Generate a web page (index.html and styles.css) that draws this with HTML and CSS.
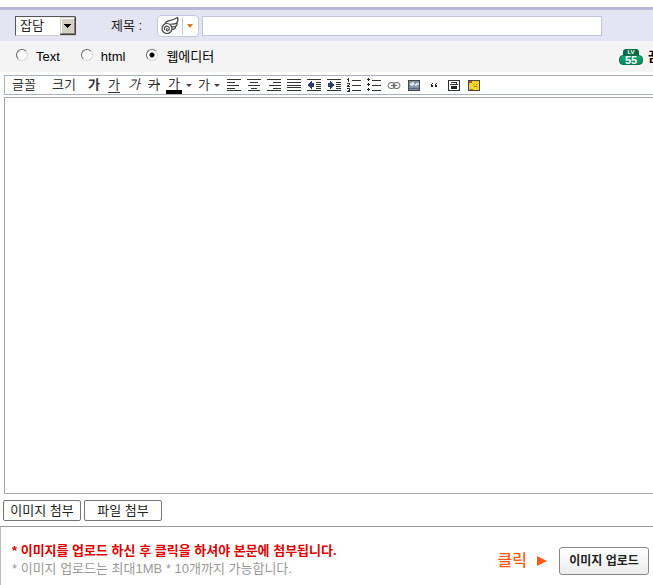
FILE: index.html
```html
<!DOCTYPE html>
<html lang="ko">
<head>
<meta charset="utf-8">
<meta name="viewport" content="width=device-width, initial-scale=1">
<title>글쓰기</title>
<link rel="stylesheet" href="styles.css">
</head>
<body>
<form class="write">
  <div class="subject">
    <div class="category">
      <select class="category-select" aria-label="분류"><option>잡담</option></select>
      <svg class="category-arrow" viewBox="0 0 16 18" shape-rendering="crispEdges" aria-hidden="true"><path fill="#d4d0c8" d="M0 0h16v18H0z"/><path fill="#fff" d="M1 1h14v1H2v14H1z"/><path fill="#808080" d="M14 1h1v16H1v-1h13z"/><path fill="#404040" d="M15 0h1v18H0v-1h15z"/><path d="M4 7h7v1H4zM5 8h5v1H5zM6 9h3v1H6zM7 10h1v1H7z"/></svg>
    </div>
    <label class="subject-label" for="subject">제목 :</label>
    <button class="emblem" type="button" aria-label="머리 아이콘">
      <svg width="40" height="20" viewBox="0 0 40 20" aria-hidden="true"><g fill="none" stroke="#444" stroke-width="1.2" stroke-linecap="round" stroke-linejoin="round"><path fill="#fff" d="M7 7.500C8 4.500 11 5 14 4C17 3 18 2.500 19.500 1.500C20.300 3.500 20 5.500 18.800 7C19.500 8 19 9.500 17.500 10.500C17.800 12 16.500 13.300 14.500 13.300"/><circle cx="9" cy="12.500" r="5" fill="#fff"/><path d="M6.500 13.500C5.500 11 8 9.500 10 10.500C12.300 11.700 11.500 15 9.300 14.800C7.800 14.500 8 12.500 9.300 12.800M13 8C15.500 8.300 17.500 7.800 18.800 7M14.500 10.800C15.700 11 16.800 10.900 17.500 10.500"/></g><path stroke="#c5c7dc" d="M24.500 2v16"/><path fill="#dc7a20" d="M29 8h6l-3 4z"/></svg>
    </button>
    <input class="subject-input" id="subject" type="text">
  </div>

  <div class="modes">
    <label class="mode"><input type="radio" name="mode">Text</label>
    <label class="mode"><input type="radio" name="mode">html</label>
    <label class="mode"><input type="radio" name="mode" checked>웹에디터</label>
    <div class="member">
      <span class="level"><span class="level-top">LV</span><span class="level-number">55</span></span>
      <b class="member-name">꿈</b>
    </div>
  </div>

  <div class="toolbar" role="toolbar" aria-label="서식">
    <button class="tool font" type="button">글꼴</button>
    <button class="tool size" type="button">크기</button>
    <button class="tool" type="button"><b>가</b></button>
    <button class="tool" type="button"><span class="underline">가</span></button>
    <button class="tool" type="button"><i>가</i></button>
    <button class="tool" type="button"><s>가</s></button>
    <button class="tool wide" type="button"><span class="ink">가</span><span class="caret"></span></button>
    <button class="tool wide" type="button"><span>가</span><span class="caret"></span></button>
    <button class="tool" type="button" aria-label="왼쪽 정렬"><svg viewBox="0 0 14 14"><path d="M0 1.500h14M0 4.500h8M0 7.500h12M0 10.500h8M0 12.500h14"/></svg></button>
    <button class="tool" type="button" aria-label="가운데 정렬"><svg viewBox="0 0 14 14"><path d="M0 1.500h14M3 4.500h8M1 7.500h12M4 10.500h6M1 12.500h12"/></svg></button>
    <button class="tool" type="button" aria-label="오른쪽 정렬"><svg viewBox="0 0 14 14"><path d="M0 1.500h14M6 4.500h8M2 7.500h12M6 10.500h8M0 12.500h14"/></svg></button>
    <button class="tool" type="button" aria-label="양쪽 정렬"><svg viewBox="0 0 14 14"><path d="M0 1.500h14M0 4.500h14M0 7.500h14M0 9.500h14M0 12.500h14"/></svg></button>
    <button class="tool" type="button" aria-label="내어쓰기"><svg viewBox="0 0 14 14"><path d="M0 1.500h14M9 4.500h5M9 6.500h5M9 8.500h5M9 10.500h5M0 12.500h14"/><path class="navy" d="M1 6h1V5h1V4h1V3h1v2h2v4H5v2H4v-1H3V9H2V8H1z"/></svg></button>
    <button class="tool" type="button" aria-label="들여쓰기"><svg viewBox="0 0 14 14"><path d="M0 1.500h14M9 4.500h5M9 6.500h5M9 8.500h5M9 10.500h5M0 12.500h14"/><path class="navy" d="M7 6H6V5H5V4H4V3H3v2H1v4h2v2h1v-1h1V9h1V8h1z"/></svg></button>
    <button class="tool" type="button" aria-label="번호 목록"><svg viewBox="0 0 14 14"><path d="M5 2.500h9M5 7.500h9M5 12.500h9M1.500 0v4M0 1.500h2M0 5.500h2M2.500 5v2M0 7.500h2M0 8.500h3M0 10.500h2M1 12.500h1M0 13.500h2M2.500 10v4"/></svg></button>
    <button class="tool" type="button" aria-label="글머리 목록"><svg viewBox="0 0 14 14"><path d="M5 2.500h9M5 7.500h9M5 12.500h9"/><path class="black" d="M0 1h3v1H0zM0 6h3v1H0zM0 11h3v1H0zM1 0h1v3H1zM1 5h1v3H1zM1 10h1v3H1z"/></svg></button>
    <button class="tool" type="button" aria-label="링크"><svg class="smooth" viewBox="0 0 14 14"><rect x="1" y="4.500" width="7" height="6" rx="3"/><rect x="6" y="4.500" width="7" height="6" rx="3"/><path d="M4 7.500h6"/></svg></button>
    <button class="tool" type="button" aria-label="사진"><svg viewBox="0 0 14 14"><path fill="#8293a8" stroke="#444" d="M1.500 2.500h11v10h-11z"/><path class="pale" d="M3 5h2V4h2v2h2V5h3v2h-2v1H8V7H6v1H4V7H3z"/><path stroke="#596575" d="M2 10.500h10"/></svg></button>
    <button class="tool" type="button" aria-label="인용"><svg viewBox="0 0 14 14"><path class="black" d="M5 5h1v1H5v1h1v2H4V6h1zM9 5h1v1H9v1h1v2H8V6h1z"/></svg></button>
    <button class="tool" type="button" aria-label="저장"><svg viewBox="0 0 14 14"><path d="M1.500 2.500h11v10h-11zM4 4.500h6M3 6.500h8M9.500 4v3"/><path class="black" d="M4 8h6v3H4z"/></svg></button>
    <button class="tool" type="button" aria-label="이모티콘"><svg viewBox="0 0 14 14"><path fill="#b9bdb0" stroke="#4a4633" d="M1.500 2.500h11v10h-11z"/><path class="red" d="M2 3h3v2H2z"/><path class="yellow" d="M5 3h6v1h1v8H3V9H2V7h1V5h2z"/><path stroke="#a8741c" d="M6 6.500h1M9 6.500h1M7 8.500h3M3 11.500h3"/></svg></button>
  </div>
  <textarea class="editor" aria-label="본문"></textarea>

  <div class="attach">
    <button class="attach-button" type="button">이미지 첨부</button>
    <button class="attach-button" type="button">파일 첨부</button>
  </div>

  <div class="upload">
    <div class="notes">
      <p class="warning">* 이미지를 업로드 하신 후 클릭을 하셔야 본문에 첨부됩니다.</p>
      <p class="limit">* 이미지 업로드는 최대1MB * 10개까지 가능합니다.</p>
    </div>
    <span class="click">클릭<svg width="10" height="12" viewBox="0 0 10 12" aria-hidden="true"><path fill="#ff5a13" d="M0 1l10 5-10 5z"/></svg></span>
    <button class="upload-button" type="button">이미지 업로드</button>
  </div>
</form>
</body>
</html>
```

FILE: styles.css
```css
* {
  box-sizing: border-box;
}

body {
  margin: 0;
  background: #fff;
  color: #222;
  font: 13px/18px "Liberation Sans", "Noto Sans CJK KR", sans-serif;
  overflow: hidden;
}

button,
input,
select,
textarea {
  margin: 0;
  padding: 0;
  font: inherit;
  color: inherit;
}

.write {
  display: flex;
  flex-direction: column;
  min-height: 100vh;
  padding-top: 7px;
}

.subject {
  display: flex;
  align-items: center;
  height: 34px;
  padding: 0 51px 0 15px;
  background: #e5e4f2;
  border-top: 3px solid #b9b7d9;
}

.category {
  display: grid;
  align-items: center;
  justify-items: end;
  width: 61px;
}

.category > * {
  grid-area: 1 / 1;
}

.category-select {
  width: 100%;
  height: 20px;
  padding-left: 4px;
  appearance: none;
  background: #fff;
  border: 1px solid #d4d0c8;
  border-top-color: #555;
  border-left-color: #555;
  border-radius: 0;
  line-height: 18px;
}

.category-arrow {
  width: 16px;
  height: 18px;
  pointer-events: none;
}

.subject-label {
  width: 46px;
  margin-left: 35px;
}

.emblem {
  display: flex;
  flex: none;
  width: 42px;
  height: 22px;
  margin-right: 3px;
  background: #fff;
  border: 1px solid #c5c7dc;
  border-radius: 4px;
}

.subject-input {
  flex: 1;
  min-width: 0;
  height: 20px;
  border: 1px solid #c3c5d8;
}

.modes {
  display: flex;
  align-items: center;
  height: 31px;
  padding-left: 16px;
  background: #f4f4f4;
}

.mode {
  display: flex;
  align-items: center;
  gap: 8px;
  margin-right: 21px;
  color: #000;
}

.mode input {
  width: 12px;
  height: 12px;
  margin-bottom: 4px;
  appearance: none;
  background: #fff;
  border: 1px solid #d8d5ce;
  border-top-color: #666;
  border-left-color: #666;
  border-radius: 50%;
}

.mode input:checked {
  background: radial-gradient(circle, #000 2px, #fff 3px);
}

.member {
  display: flex;
  align-items: center;
  gap: 5px;
  width: 34px;
  margin-left: auto;
  white-space: nowrap;
}

.level {
  display: flex;
  flex: none;
  flex-direction: column;
  align-items: center;
  width: 24px;
  color: #fff;
  font-weight: bold;
}

.level-top {
  width: 16px;
  height: 6px;
  background: #086b46;
  border-radius: 3px 3px 0 0;
  font-size: 6px;
  line-height: 6px;
  text-align: center;
}

.level-number {
  width: 24px;
  height: 10px;
  background: linear-gradient(#12a878, #07885b);
  border: 1px solid #08734c;
  border-radius: 4px;
  font-size: 11px;
  line-height: 9px;
  text-align: center;
}

.member-name {
  color: #000;
}

.toolbar {
  display: flex;
  align-items: center;
  height: 20px;
  margin: 3px 0 2px 4px;
  padding-left: 6px;
  border: 1px solid #a9b1bb;
  border-right: 0;
}

.tool {
  display: flex;
  flex: none;
  align-items: center;
  justify-content: center;
  width: 20px;
  height: 18px;
  background: none;
  border: 0;
  color: #333;
  line-height: 16px;
}

.font,
.size {
  width: 26px;
}

.size {
  margin: 0 7px 0 14px;
}

.wide {
  gap: 4px;
  width: 30px;
}

.underline {
  height: 16px;
  border-bottom: 1px solid #333;
}

.ink {
  height: 17px;
  padding: 0 2px;
  border-bottom: 4px solid #000;
  line-height: 14px;
}

.caret {
  border: 3px solid transparent;
  border-top: 3px solid #444;
  border-bottom: 0;
}

.tool svg {
  width: 14px;
  height: 14px;
  fill: none;
  stroke: #333;
  shape-rendering: crispEdges;
}

.tool .smooth {
  stroke: #666;
  shape-rendering: auto;
}

.tool .navy {
  fill: #2d3b70;
  stroke: none;
}

.tool .black {
  fill: #222;
  stroke: none;
}

.tool .pale {
  fill: #d6e0ea;
  stroke: none;
}

.tool .red {
  fill: #c44f27;
  stroke: none;
}

.tool .yellow {
  fill: #f7d62c;
  stroke: none;
}

.editor {
  display: block;
  flex: 1;
  margin-left: 4px;
  background: #fff;
  border: 1px solid #a6a6a6;
  border-right: 0;
  border-radius: 0;
  resize: none;
}

.attach {
  display: flex;
  gap: 3px;
  padding: 6px 3px 5px;
}

.attach-button {
  width: 78px;
  height: 21px;
  background: #fff;
  border: 1px solid #777;
  border-radius: 2px;
  line-height: 18px;
}

.upload {
  display: flex;
  align-items: center;
  height: 59px;
  padding: 9px 4px 0 11px;
  border-top: 1px solid #999;
  border-left: 1px solid #bbb;
}

.notes {
  flex: 1;
  padding-bottom: 2px;
  white-space: nowrap;
}

.notes p {
  margin: 0;
}

.warning {
  color: #e00000;
  font-weight: bold;
}

.limit {
  color: #999;
}

.click {
  display: flex;
  align-items: center;
  gap: 10px;
  margin-right: 12px;
  color: #ff5a13;
  font-size: 16px;
  font-weight: 500;
}

.upload-button {
  width: 90px;
  height: 28px;
  background: linear-gradient(#fff, #ececec);
  border: 1px solid #888;
  border-radius: 3px;
  font-size: 12px;
  font-weight: bold;
}
```
